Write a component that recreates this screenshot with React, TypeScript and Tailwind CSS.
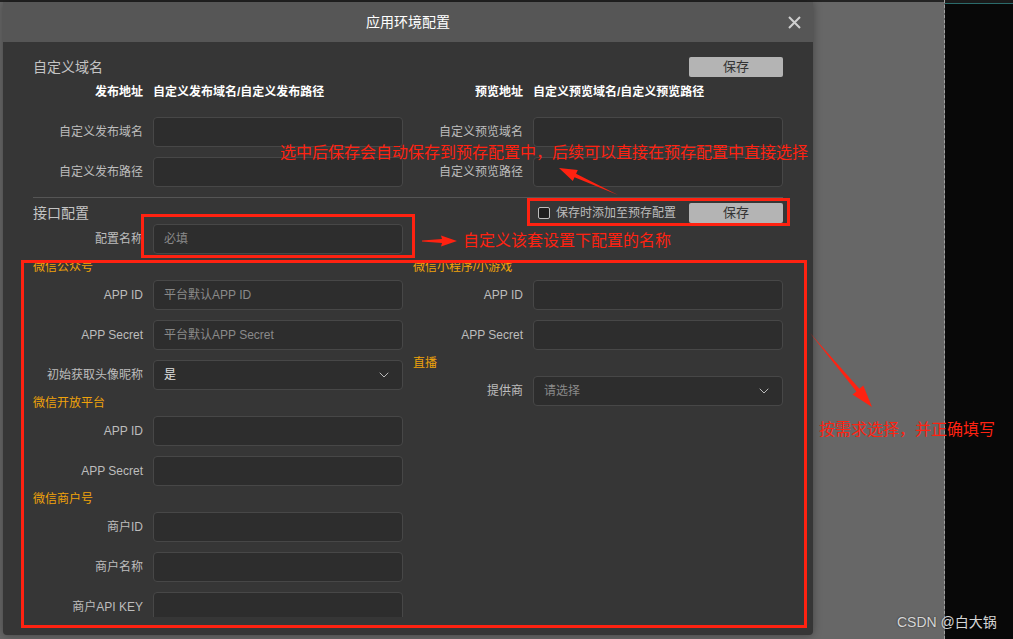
import { ChevronDown } from "lucide-react";

const font = { fontFamily: '"Liberation Sans", "Noto Sans CJK SC", sans-serif' };

function Field({ label, placeholder, value, select }: { label: string; placeholder?: string; value?: string; select?: boolean }) {
  return (
    <div className="flex items-center h-[30px]">
      <div className="w-[120px] shrink-0 pr-[10px] text-right text-[12px] text-[#bdbdbd] whitespace-nowrap">{label}</div>
      <div className="w-[250px] h-[30px] flex items-center justify-between rounded-[4px] border border-[#474747] bg-[#2d2d2d] px-[10px] text-[12px]">
        {value ? (
          <span className="text-[#e0e0e0]">{value}</span>
        ) : (
          <span className="text-[#8a8a8a]">{placeholder}</span>
        )}
        {select && <ChevronDown size={16} strokeWidth={1.5} className="text-[#bbbbbb]" />}
      </div>
    </div>
  );
}

function Heading({ children }: { children: React.ReactNode }) {
  return <div className="h-[26px] flex items-center text-[12px] text-[#f0a30a]">{children}</div>;
}

function SaveButton() {
  return (
    <div className="w-[94px] h-[20px] flex items-center justify-center rounded-[2px] bg-[#b4b4b4] text-[13px] text-[#333333]">保存</div>
  );
}

export default function App() {
  return (
    <div className="relative w-[1013px] h-[639px] overflow-hidden bg-[#080808]" style={font}>
      <div className="flex h-full">
        {/* desktop area with dialog */}
        <div className="w-[945px] h-full bg-[#676767] border-r border-dashed border-[#a0a0a0] flex flex-col">
          <div className="h-[2px] bg-[#232323]" />
          <div className="pl-[3px]">
            <div className="w-[810px] h-[633px] rounded-b-[4px] overflow-hidden bg-[#363636] shadow-[0_0_8px_rgba(0,0,0,0.35)] flex flex-col">
              {/* header */}
              <div className="h-[40px] shrink-0 bg-[#565656] relative flex items-center justify-center">
                <span className="text-[14px] text-white">应用环境配置</span>
                <svg className="absolute right-[12px] top-[14px]" width="13" height="13" viewBox="0 0 13 13">
                  <path d="M1 1L12 12M12 1L1 12" stroke="#cfcfcf" strokeWidth="2" />
                </svg>
              </div>
              {/* body */}
              <div className="h-[575px] overflow-hidden px-[30px] pt-[15px]">
                <div className="w-[750px]">
                  <div className="flex items-center justify-between h-[20px]">
                    <span className="text-[14px] text-[#c4c4c4]">自定义域名</span>
                    <SaveButton />
                  </div>
                  <div className="mt-[5px] h-[20px] grid grid-cols-2 gap-x-[10px] text-[12px] font-bold text-white">
                    <div className="flex items-center">
                      <span className="w-[120px] pr-[10px] text-right">发布地址</span>
                      <span>自定义发布域名/自定义发布路径</span>
                    </div>
                    <div className="flex items-center">
                      <span className="w-[120px] pr-[10px] text-right">预览地址</span>
                      <span>自定义预览域名/自定义预览路径</span>
                    </div>
                  </div>
                  <div className="mt-[15px] grid grid-cols-2 gap-x-[10px] gap-y-[10px]">
                    <Field label="自定义发布域名" />
                    <Field label="自定义预览域名" />
                    <Field label="自定义发布路径" />
                    <Field label="自定义预览路径" />
                  </div>
                  <div className="mt-[10px] h-px bg-[#555555]" />
                  <div className="mt-[5px] h-[20px] flex items-center justify-between">
                    <span className="text-[14px] text-[#c4c4c4]">接口配置</span>
                    <div className="flex items-center">
                      <div className="w-[12px] h-[12px] rounded-[2px] border border-[#bdbdbd] bg-[#1e1e1e]" />
                      <span className="ml-[6px] mr-[13px] text-[12px] text-[#bdbdbd]">保存时添加至预存配置</span>
                      <SaveButton />
                    </div>
                  </div>
                  <div className="mt-[1px] grid grid-cols-2 gap-x-[10px]">
                    <Field label="配置名称" placeholder="必填" />
                  </div>
                  <div className="grid grid-cols-2 gap-x-[10px]">
                    <div className="flex flex-col">
                      <Heading>微信公众号</Heading>
                      <Field label="APP ID" placeholder="平台默认APP ID" />
                      <div className="mt-[10px]"><Field label="APP Secret" placeholder="平台默认APP Secret" /></div>
                      <div className="mt-[10px]"><Field label="初始获取头像昵称" value="是" select /></div>
                      <Heading>微信开放平台</Heading>
                      <Field label="APP ID" />
                      <div className="mt-[10px]"><Field label="APP Secret" /></div>
                      <Heading>微信商户号</Heading>
                      <Field label="商户ID" />
                      <div className="mt-[10px]"><Field label="商户名称" /></div>
                      <div className="mt-[10px]"><Field label="商户API KEY" /></div>
                    </div>
                    <div className="flex flex-col">
                      <Heading>微信小程序/小游戏</Heading>
                      <Field label="APP ID" />
                      <div className="mt-[10px]"><Field label="APP Secret" /></div>
                      <Heading>直播</Heading>
                      <Field label="提供商" placeholder="请选择" select />
                    </div>
                  </div>
                </div>
              </div>
            </div>
          </div>
        </div>
        <div className="flex-1 flex flex-col">
          <div className="h-[3px] bg-[#1a1a1a]" />
          <div className="h-px bg-[#2b6b6b]" />
        </div>
      </div>

      {/* annotations */}
      <div className="absolute left-[141px] top-[214px] w-[274px] h-[44px] border-[3px] border-[#ff2211]" />
      <div className="absolute left-[527px] top-[198px] w-[263px] h-[28px] border-[3px] border-[#ff2211]" />
      <div className="absolute left-[21px] top-[260px] w-[786px] h-[368px] border-[3px] border-[#ff2211]" />
      <svg className="absolute left-0 top-0 pointer-events-none" width="1013" height="639">
        <polygon points="618,195 576.1,173.7 577.8,170.1 559,168 572.8,180.9 574.5,177.3" fill="#ff2211" />
        <polygon points="422,240.5 442,239 441,235.5 457,241 441,246.5 442,243 422,241.5" fill="#ff2211" />
        <polygon points="810,333 859.4,388.8 863.3,385.6 872,407 852.5,394.6 856.4,391.4" fill="#ff2211" />
      </svg>
      <div className="absolute left-[280px] top-[142px] text-[16px] leading-[22px] text-[#ff2211] whitespace-nowrap">选中后保存会自动保存到预存配置中，后续可以直接在预存配置中直接选择</div>
      <div className="absolute left-[463px] top-[230px] text-[16px] leading-[22px] text-[#ff2211] whitespace-nowrap">自定义该套设置下配置的名称</div>
      <div className="absolute left-[819px] top-[419px] text-[16px] leading-[22px] text-[#ff2211] whitespace-nowrap">按需求选择，并正确填写</div>
      <div className="absolute left-[897px] top-[612px] text-[14px] leading-[20px] text-[#d6d6d6] whitespace-nowrap [text-shadow:0_0_2px_rgba(0,0,0,0.6)]">CSDN @白大锅</div>
    </div>
  );
}
